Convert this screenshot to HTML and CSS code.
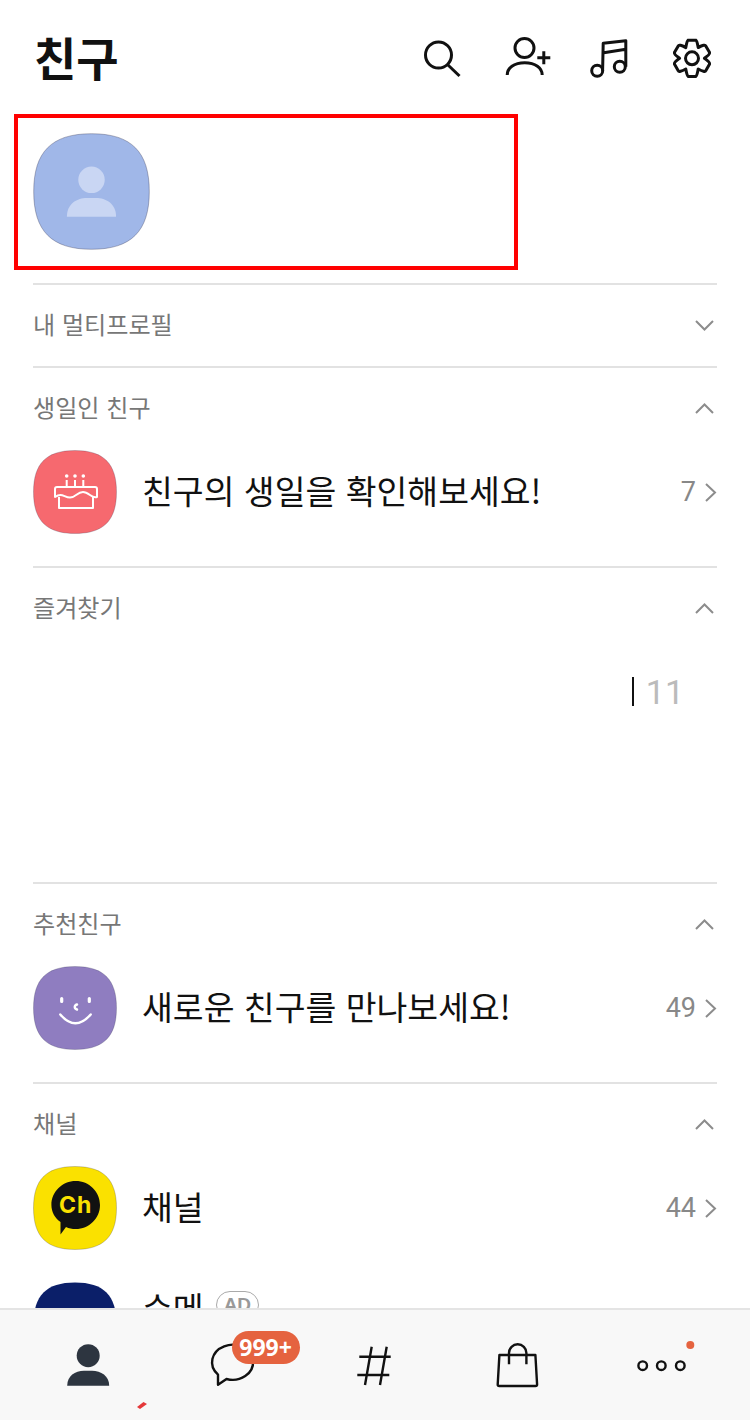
FILE: index.html
```html
<!DOCTYPE html>
<html lang="ko">
<head>
<meta charset="utf-8">
<title>친구</title>
<link rel="stylesheet" href="styles.css">
</head>
<body>
<svg class="defs" width="0" height="0" aria-hidden="true">
  <defs>
    <path id="sq" d="M50 .6C84 .6 99.4 16 99.4 50S84 99.4 50 99.4 .6 84 .6 50 16 .6 50 .6Z"/>
    <path id="chev-up" d="M1 11 9.5 2.5 18 11"/>
    <path id="chev-down" d="M1 2 9.5 10.5 18 2"/>
    <path id="chev-right" d="M2 1 11 9.5 2 18"/>
  </defs>
</svg>
<div class="screen">
  <header class="top">
    <h1 class="title">친구</h1>
    <div class="top-icons">
      <svg class="ic" viewBox="0 0 44 44"><circle cx="17.5" cy="20" r="13"/><path d="M27 30 38.5 41"/></svg>
      <svg class="ic" viewBox="0 0 44 44"><circle cx="20.5" cy="13" r="9.5"/><path d="M3.2 40C3.2 33 10 27.7 20.7 27.7S38.2 33 38.2 40M39.8 16.2V29.2M33.3 22.7H46.3"/></svg>
      <svg class="ic" viewBox="0 0 44 44"><circle cx="10.2" cy="35.7" r="5.5"/><circle cx="32.8" cy="31.7" r="5.5"/><path d="M15.6 35.7 16.2 8.3 38.8 5.7V31.7M16.8 17.7 38.8 14.3"/></svg>
      <svg class="ic" viewBox="-22 -23.3 44 44"><path d="M-3.85-18.1H3.85Q5 -17.5 6.2-10.7 13 -14.5 13.75-12.4L17.6-5.7Q18-4 12.4 0 18 4 17.6 5.7L13.75 12.4Q13 14.5 6.2 10.7 5 17.5 3.85 18.1H-3.85Q-5 17.5-6.2 10.7-13 14.5-13.75 12.4L-17.6 5.7Q-18 4-12.4 0-18-4-17.6-5.7L-13.75-12.4Q-13-14.5-6.2-10.7-5-17.5-3.85-18.1Z"/><circle cx="0" cy="0" r="6.5"/></svg>
    </div>
  </header>

  <div class="me-box">
    <svg class="avatar" viewBox="0 0 100 100">
      <use href="#sq" class="sq sq-blue"/>
      <circle class="pale" cx="50" cy="40" r="11.3"/>
      <path class="pale" d="M29 71.5C29 60 38 55.5 46 55.5H54C62 55.5 71 60 71 71.5Z"/>
    </svg>
  </div>

  <section class="sec sec-first">
    <div class="sec-head"><span>내 멀티프로필</span><svg class="chev" viewBox="0 0 19 13"><use href="#chev-down"/></svg></div>
  </section>

  <section class="sec">
    <div class="sec-head"><span>생일인 친구</span><svg class="chev" viewBox="0 0 19 13"><use href="#chev-up"/></svg></div>
    <div class="row">
      <svg class="app" viewBox="0 0 84 84">
        <use href="#sq" class="sq sq-red" transform="scale(.84)"/>
        <g class="cake">
          <path d="M33.7 30V36M42 30V36M50.300 30V36M24 37H62Q64 37 64 39V47C59 49 56 42 50 42S43 47.500 37 47.500 29 42 22 47V39Q22 37 24 37ZM26 47V58H60V47"/>
        </g>
        <circle class="flame" cx="33.7" cy="26" r="1.800"/><circle class="flame" cx="42" cy="26" r="1.800"/><circle class="flame" cx="50.3" cy="26" r="1.800"/>
      </svg>
      <span class="row-name">친구의 생일을 확인해보세요!</span>
      <span class="count">7</span>
      <svg class="arrow" viewBox="0 0 13 19"><use href="#chev-right"/></svg>
    </div>
  </section>

  <section class="sec">
    <div class="sec-head"><span>즐겨찾기</span><svg class="chev" viewBox="0 0 19 13"><use href="#chev-up"/></svg></div>
    <div class="fav"><i class="caret"></i><span class="fav-num">11</span></div>
  </section>

  <section class="sec">
    <div class="sec-head"><span>추천친구</span><svg class="chev" viewBox="0 0 19 13"><use href="#chev-up"/></svg></div>
    <div class="row">
      <svg class="app" viewBox="0 0 84 84">
        <use href="#sq" class="sq sq-purple" transform="scale(.84)"/>
        <g class="smile">
          <path class="eye" d="M28.7 32.500V35.500M56.300 32.500V35.500"/>
          <path d="M44 38.500C41 39.500 41 42.500 44 43.500M27.300 48.500Q42.300 66 57.700 48.500"/>
        </g>
      </svg>
      <span class="row-name">새로운 친구를 만나보세요!</span>
      <span class="count">49</span>
      <svg class="arrow" viewBox="0 0 13 19"><use href="#chev-right"/></svg>
    </div>
  </section>

  <section class="sec">
    <div class="sec-head"><span>채널</span><svg class="chev" viewBox="0 0 19 13"><use href="#chev-up"/></svg></div>
    <div class="row">
      <svg class="app" viewBox="0 0 84 84">
        <use href="#sq" class="sq sq-yellow" transform="scale(.84)"/>
        <path class="ch-bubble" d="M42.7 15C56 15 67 25.500 67 39S56 63 42.700 63C39 63 36 62.500 33 61L27.500 68.500V56C22 52 18.400 46 18.400 39 18.400 25.500 29.500 15 42.700 15Z"/>
        <text class="ch-text" x="42.700" y="47" text-anchor="middle">Ch</text>
      </svg>
      <span class="row-name">채널</span>
      <span class="count">44</span>
      <svg class="arrow" viewBox="0 0 13 19"><use href="#chev-right"/></svg>
    </div>
    <div class="row row-next">
      <svg class="app" viewBox="0 0 84 84">
        <use href="#sq" class="sq sq-navy" transform="scale(.84)"/>
        <circle class="navy-dot" cx="42" cy="31" r="5"/>
      </svg>
      <span class="row-name">슈메</span>
      <span class="ad">AD</span>
    </div>
  </section>

  <nav class="nav">
    <div class="tab">
      <svg class="tab-ic" viewBox="0 0 48 48"><circle class="dark" cx="24.2" cy="14.700" r="11.500"/><path class="dark" d="M3.200 44.700C3.200 35 11 29.700 20 29.700H28C37 29.700 45.200 35 45.200 44.700Z"/></svg>
      <svg class="tick" viewBox="0 0 10 7"><path d="M0 5 6.500 0 10 2 3 7Z"/></svg>
    </div>
    <div class="tab">
      <svg class="tab-ic line" viewBox="0 0 48 48"><path d="M11 33.600V43.800L19.500 38A20.500 17.500 0 1 0 11 33.600Z"/></svg>
      <span class="badge">999+</span>
    </div>
    <div class="tab">
      <svg class="tab-ic line" viewBox="0 0 48 48"><path d="M20.700 5.700 14 44M35.700 5.700 29 44M8.300 15.700H39.700M6.300 34H38.300"/></svg>
    </div>
    <div class="tab">
      <svg class="tab-ic line" viewBox="0 0 48 48"><path d="M4.400 14H40.400L42.100 43.500Q42.100 45 40.500 45H4.300Q2.700 45 2.700 43.500ZM14 23.300V12A8.700 8.700 0 0 1 31.400 12V23.300"/></svg>
    </div>
    <div class="tab">
      <svg class="tab-ic line" viewBox="0 0 48 48"><circle cx="4.700" cy="24.700" r="4.300"/><circle cx="23.300" cy="24.700" r="4.300"/><circle cx="42.300" cy="24.700" r="4.300"/><circle class="dot" cx="52.300" cy="4" r="4"/></svg>
    </div>
  </nav>
</div>
</body>
</html>
```

FILE: styles.css
```css
* { box-sizing: border-box; }
html, body { margin: 0; padding: 0; background: #fff; }
body { font-family: "Noto Sans CJK KR", "Noto Sans", sans-serif; color: #111; }
.defs { position: absolute; }
.screen { position: relative; width: 750px; height: 1420px; overflow: hidden; background: #fff; }

.top { height: 114px; padding: 0 36px 0 34px; display: flex; align-items: center; justify-content: space-between; }
.title { margin: 0; font-size: 46px; line-height: 1; font-weight: 700; color: #111; position: relative; top: -1px; }
.top-icons { display: flex; gap: 39px; }
.ic { width: 44px; height: 44px; overflow: visible; fill: none; stroke: #111; stroke-width: 3; stroke-linecap: butt; stroke-linejoin: round; }

.me-box { width: 504px; height: 156px; margin: 0 0 13px 14px; padding: 15px; border: 4px solid #f00; }
.avatar { display: block; width: 117px; height: 117px; }

.sq { stroke: rgba(40, 40, 70, .4); stroke-width: .7; }
.sq-blue { fill: #a0b7e8; }
.sq-red { fill: #f6696f; }
.sq-purple { fill: #8f7dc0; }
.sq-yellow { fill: #fae100; }
.sq-navy { fill: #0b1f69; stroke: none; }
.pale { fill: #c9d6f3; }

.sec { margin: 0 33px; border-top: 2px solid #e2e2e2; }
.sec-head { height: 81px; display: flex; align-items: center; justify-content: space-between; font-size: 24.100px; line-height: 1; color: #777; }
.sec-head span { position: relative; top: -1px; }
.chev { width: 19px; height: 13px; margin-right: 3px; fill: none; stroke: #8c8c8c; stroke-width: 2; }

.row { height: 84px; margin: 1px 0 32px; display: flex; align-items: center; }
.row-next { margin-bottom: 0; }
.app { display: block; flex: none; width: 84px; height: 84px; margin-right: 25px; }
.row-name { font-size: 33.500px; line-height: 1; color: #111; position: relative; top: -2px; }
.count { margin-left: auto; font-family: Roboto, sans-serif; font-size: 27px; line-height: 1; color: #888; }
.arrow { width: 13px; height: 19px; margin-left: 8px; fill: none; stroke: #8c8c8c; stroke-width: 2; }

.cake path { fill: none; stroke: #fff; stroke-width: 2; stroke-linejoin: round; }
.flame { fill: #fff; }
.smile path { fill: none; stroke: #fff; stroke-width: 2.400; stroke-linecap: round; }
.smile .eye { stroke-width: 3.200; }
.ch-bubble { fill: #111; }
.ch-text { font-family: Inter, sans-serif; font-weight: 700; font-size: 23px; letter-spacing: 1px; fill: #fae100; }
.navy-dot { fill: #fff; }

.row-next .row-name { align-self: flex-start; margin-top: 8px; top: 0; }
.ad { align-self: flex-start; margin: 9px 0 0 12px; padding: 0 7px; height: 28px; border: 1.500px solid #aaa; border-radius: 14px; font-family: "Liberation Sans", sans-serif; font-weight: 700; font-size: 19px; line-height: 26px; color: #999; }

.fav { height: 233px; padding: 27px 33px 0 0; display: flex; justify-content: flex-end; align-items: flex-start; }
.caret { width: 2px; height: 29px; margin: 0 12px 0 0; background: #111; position: relative; top: 1px; }
.fav-num { font-family: Roboto, sans-serif; font-weight: 400; font-size: 34px; line-height: 32px; color: #bbb; }

.nav { position: absolute; left: 0; right: 0; bottom: 0; height: 112px; padding: 31px 16px 0; display: flex; background: #f8f8f8; border-top: 2px solid #e4e4e4; }
.tab { position: relative; flex: 1; height: 48px; display: flex; justify-content: center; }
.tab-ic { display: block; width: 48px; height: 48px; overflow: visible; }
.dark { fill: #2d3540; }
.line { fill: none; stroke: #111; stroke-width: 2.400; stroke-linejoin: round; }
.dot { fill: #e5633f; stroke: none; }
.tick { position: absolute; left: 121px; top: 61px; width: 10px; height: 7px; fill: #e5383a; }
.badge { position: absolute; left: 72px; top: -10px; width: 68px; height: 33px; border-radius: 17px; background: #e5633f; color: #fff; font-family: "Open Sans", sans-serif; font-weight: 700; font-size: 23px; line-height: 32px; text-align: center; }
```
